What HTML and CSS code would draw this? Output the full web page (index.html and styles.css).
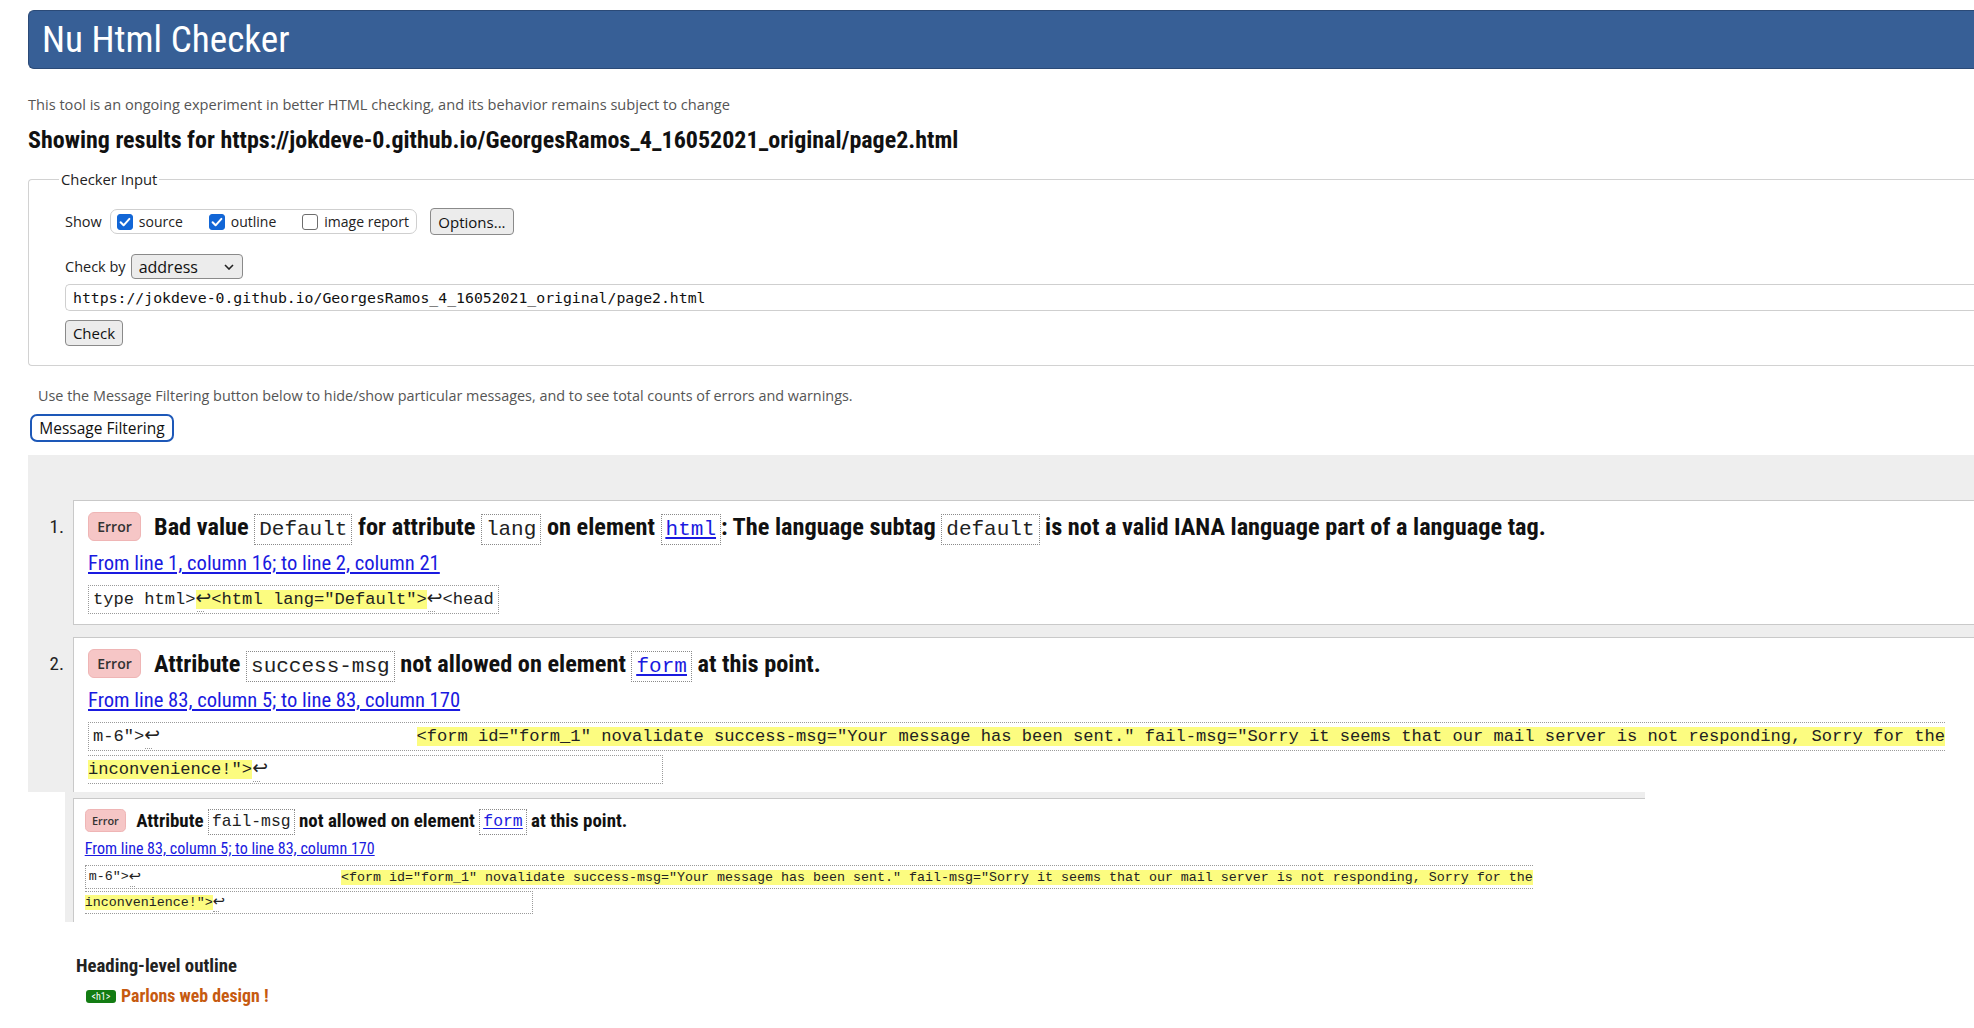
FILE: index.html
```html
<!DOCTYPE html>
<html lang="en">
<head>
<meta charset="utf-8">
<title>Nu Html Checker</title>
<link rel="stylesheet" href="styles.css">
</head>
<body>
<div class="page">
  <h1 class="banner">Nu Html Checker</h1>
  <p class="intro">This tool is an ongoing experiment in better HTML checking, and its behavior remains subject to change</p>
  <p class="showing">Showing results for https://jokdeve-0.github.io/GeorgesRamos_4_16052021_original/page2.html</p>

  <fieldset class="checker">
    <legend>Checker Input</legend>
    <div class="show-row">
      <span class="lbl">Show</span>
      <span class="opts">
        <span class="opt"><span class="cb checked"><svg viewBox="0 0 16 16" width="16" height="16"><path d="M3.6 8.3 L6.6 11.3 L12.4 4.9" fill="none" stroke="#fff" stroke-width="2" stroke-linecap="round" stroke-linejoin="round"/></svg></span>source</span>
        <span class="opt"><span class="cb checked"><svg viewBox="0 0 16 16" width="16" height="16"><path d="M3.6 8.3 L6.6 11.3 L12.4 4.9" fill="none" stroke="#fff" stroke-width="2" stroke-linecap="round" stroke-linejoin="round"/></svg></span>outline</span>
        <span class="opt"><span class="cb"></span>image report</span>
      </span>
      <button class="btn btn-options" type="button">Options...</button>
    </div>
    <div class="by-row">
      <span class="lbl">Check by</span>
      <span class="select">address<svg class="chev" viewBox="0 0 10 6" width="10" height="6"><path d="M1 1 L5 5 L9 1" fill="none" stroke="#222" stroke-width="1.6"/></svg></span>
    </div>
    <div class="url">https://jokdeve-0.github.io/GeorgesRamos_4_16052021_original/page2.html</div>
    <button class="btn btn-check" type="button">Check</button>
  </fieldset>

  <p class="note">Use the Message Filtering button below to hide/show particular messages, and to see total counts of errors and warnings.</p>
  <button class="filter-btn" type="button">Message Filtering</button>

  <div class="results">
    <ol class="messages">
      <li class="msg">
        <span class="num">1.</span>
        <div class="card">
          <p class="msg-text"><span class="badge">Error</span>Bad value <code>Default</code> for attribute <code>lang</code> on element <a href="#"><code>html</code></a>: The language subtag <code>default</code> is not a valid IANA language part of a language tag.</p>
          <p class="loc"><a href="#">From line 1, column 16; to line 2, column 21</a></p>
          <p class="extract"><code>type html&gt;<mark><span class="lf">↩</span>&lt;html lang="Default"&gt;</mark><span class="lf">↩</span>&lt;head</code></p>
        </div>
      </li>
      <li class="msg">
        <span class="num">2.</span>
        <div class="card">
          <p class="msg-text"><span class="badge">Error</span>Attribute <code>success-msg</code> not allowed on element <a href="#"><code>form</code></a> at this point.</p>
          <p class="loc"><a href="#">From line 83, column 5; to line 83, column 170</a></p>
          <p class="extract"><code>m-6"&gt;<span class="lf">↩</span>                         <mark>&lt;form id="form_1" novalidate success-msg="Your message has been sent." fail-msg="Sorry it seems that our mail server is not responding, Sorry for the
inconvenience!"&gt;</mark><span class="lf">↩</span>                                      </code></p>
        </div>
      </li>
    </ol>
  </div>

  <div class="paste">
    <ol class="messages paste-inner">
      <li class="msg">
        <span class="num">3.</span>
        <div class="card">
          <p class="msg-text"><span class="badge">Error</span>Attribute <code>fail-msg</code> not allowed on element <a href="#"><code>form</code></a> at this point.</p>
          <p class="loc"><a href="#">From line 83, column 5; to line 83, column 170</a></p>
          <p class="extract"><code>m-6"&gt;<span class="lf">↩</span>                         <mark>&lt;form id="form_1" novalidate success-msg="Your message has been sent." fail-msg="Sorry it seems that our mail server is not responding, Sorry for the
inconvenience!"&gt;</mark><span class="lf">↩</span>                                      </code></p>
        </div>
      </li>
    </ol>
  </div>

  <section class="outline">
    <h2 class="outline-title">Heading-level outline</h2>
    <p class="outline-item"><span class="h-tag">&lt;h1&gt;</span>Parlons web design !</p>
  </section>
</div>
</body>
</html>
```

FILE: styles.css
```css
* { box-sizing: border-box; }

html, body {
  margin: 0;
  padding: 0;
  background: #fff;
}

body {
  overflow: hidden;
  font-family: "Open Sans", "Noto Sans", sans-serif;
  color: #222;
}

.page {
  width: 2100px;
  padding: 10px 0 0 28px;
}

/* condensed grotesque used by the checker's headings and messages */
.banner,
.showing,
.num,
.msg-text,
.loc,
.outline-title,
.outline-item,
.h-tag {
  font-family: "Roboto Condensed", "Liberation Sans Narrow", "Arial Narrow", Roboto, sans-serif;
  font-stretch: condensed;
}

/* ---------- banner ---------- */
.banner {
  margin: 0;
  height: 59px;
  padding-left: 13px;
  background: #375f96;
  border: 1px solid #2b4a77;
  border-right: 0;
  border-radius: 6px 0 0 6px;
  color: #fff;
  font-size: 37.2px;
  font-weight: 400;
  line-height: 57px;
}

.intro {
  margin: 25px 0 0;
  font-size: 14.6px;
  line-height: 20px;
  color: #555;
}

.showing {
  margin: 12px 0 0;
  font-size: 24px;
  font-weight: 700;
  line-height: 28px;
  color: #111;
}

/* ---------- checker input ---------- */
.checker {
  margin: 15px 0 0;
  padding: 0 0 19px 36px;
  border: 1px solid #d2d2d2;
  border-right: 0;
  border-radius: 4px 0 0 4px;
  min-width: 0;
}

.checker legend {
  margin-left: -6px;
  padding: 0 2px;
  font-size: 14.8px;
  line-height: 20px;
  color: #222;
}

.lbl {
  font-size: 14.5px;
  color: #222;
}

.show-row {
  display: flex;
  align-items: center;
  height: 25px;
  margin-top: 20px;
}

.opts {
  display: flex;
  align-items: center;
  height: 25px;
  margin-left: 8px;
  padding: 0 7px 0 6px;
  border: 1px solid #cfcfcf;
  border-radius: 7px;
}

.opt {
  display: flex;
  align-items: center;
  font-size: 14px;
  color: #222;
  margin-right: 26px;
}

.opt:last-child { margin-right: 0; }

.cb {
  display: inline-block;
  width: 16px;
  height: 16px;
  margin-right: 6px;
  border: 1px solid #6d6d6d;
  border-radius: 3px;
  background: #fff;
}

.cb svg { display: block; margin: -1px; }

.cb.checked {
  background: #1266d6;
  border-color: #1266d6;
}

.btn {
  margin: 0;
  padding: 0;
  font-family: "Open Sans", "Noto Sans", sans-serif;
  font-size: 15px;
  color: #111;
  background: #ececec;
  border: 1px solid #8a8a8a;
  border-radius: 4px;
}

.btn-options {
  width: 84px;
  height: 27px;
  margin-left: 13px;
}

.by-row {
  display: flex;
  align-items: center;
  height: 25px;
  margin-top: 20px;
}

.select {
  display: flex;
  align-items: center;
  justify-content: space-between;
  width: 112px;
  height: 25px;
  margin-left: 5px;
  padding: 0 8px 0 7px;
  font-size: 16px;
  color: #111;
  background: #ececec;
  border: 1px solid #8a8a8a;
  border-radius: 4px;
}

.chev { display: block; }

.url {
  margin-top: 5px;
  height: 27px;
  padding-left: 7px;
  border: 1px solid #cfcfcf;
  border-radius: 5px 0 0 5px;
  border-right: 0;
  font: 400 14.8px/25px "DejaVu Sans Mono", "Liberation Mono", monospace;
  color: #111;
}

.btn-check {
  display: block;
  width: 58px;
  height: 26px;
  margin-top: 9px;
}

/* ---------- filtering ---------- */
.note {
  margin: 20px 0 0 10px;
  font-size: 14.4px;
  line-height: 20px;
  color: #555;
}

.filter-btn {
  display: block;
  width: 144px;
  height: 28px;
  margin: 8px 0 0 2px;
  padding: 0;
  font-family: "Open Sans", "Noto Sans", sans-serif;
  font-size: 15.5px;
  color: #111;
  background: #fff;
  border: 2px solid #1d58b8;
  border-radius: 7px;
}

/* ---------- results ---------- */
.results {
  margin-top: 13px;
  height: 337px;
  padding-top: 45px;
  background: #eee;
  overflow: hidden;
}

.messages {
  margin: 0;
  padding: 0;
  list-style: none;
}

.msg {
  display: grid;
  grid-template-columns: 45px 1fr;
  margin-bottom: 12px;
}

.num {
  padding: 9px 9px 0 0;
  text-align: right;
  font-size: 19px;
  font-weight: 400;
  line-height: 36px;
  color: #222;
}

.card {
  padding: 8px 15px 8px 14px;
  background: #fff;
  border: 1px solid #c9c9c9;
  border-right: 0;
}

.msg-text {
  margin: 0;
  font-size: 24.3px;
  font-weight: 700;
  line-height: 36px;
  color: #111;
  white-space: nowrap;
}

.badge {
  display: inline-block;
  width: 53px;
  height: 29px;
  margin-right: 13px;
  vertical-align: middle;
  position: relative;
  top: -2px;
  text-align: center;
  font: 600 14px/27px "Open Sans", "Noto Sans", sans-serif;
  font-stretch: normal;
  color: #333;
  background: #f6c6c6;
  border: 1px solid #efb5b5;
  border-radius: 6px;
}

.msg-text code {
  padding: 3px 4px;
  font: 400 21px "Liberation Mono", "DejaVu Sans Mono", monospace;
  color: #222;
  border: 1px dotted #8a8a8a;
}

.msg-text a { color: #1a1ae0; }
.msg-text a code { color: #1a1ae0; text-decoration: underline; }

.loc {
  margin: 3px 0 0;
  font-size: 20.6px;
  font-weight: 400;
  line-height: 30px;
}

.loc a {
  color: #1a1ae0;
  text-decoration: underline;
}

.extract {
  margin: 5px 0 0;
  white-space: pre;
  font: 400 17.1px/33px "Liberation Mono", "DejaVu Sans Mono", monospace;
  color: #222;
}

.extract code {
  padding: 4px 4px;
  font: inherit;
  border: 1px dotted #9a9a9a;
}

.extract mark {
  background: #fcfc80;
  color: inherit;
}

.lf {
  position: relative;
  font-family: "DejaVu Sans", sans-serif;
  font-size: 1.1em;
  line-height: 1;
}

.lf::after {
  content: "";
  position: absolute;
  left: 1px;
  bottom: -4px;
  width: 7px;
  border-bottom: 1px dotted #999;
}

/* ---------- pasted smaller capture ---------- */
.paste {
  margin-left: 37px;
  width: 1580px;
  height: 130px;
  padding-top: 6px;
  background: #eee;
  overflow: hidden;
}

.paste-inner {
  zoom: 0.78;
  width: 2300px;
  margin-left: -35px;
}

.paste-inner .card {
  padding-top: 10px;
}

.paste-inner .num {
  padding-top: 11px;
}

/* ---------- outline ---------- */
.outline {
  margin: 32px 0 0 48px;
}

.outline-title {
  margin: 0;
  font-size: 18.8px;
  font-weight: 700;
  line-height: 24px;
  color: #222;
}

.outline-item {
  display: flex;
  align-items: center;
  margin: 7px 0 0 10px;
  height: 22px;
  font-size: 17.8px;
  font-weight: 700;
  line-height: 22px;
  color: #c65a10;
}

.h-tag {
  display: inline-block;
  width: 30px;
  height: 13px;
  margin-right: 5px;
  font-size: 10px;
  font-weight: 400;
  line-height: 13px;
  text-align: center;
  color: #fff;
  background: #137c13;
  border-radius: 3px;
}
```
